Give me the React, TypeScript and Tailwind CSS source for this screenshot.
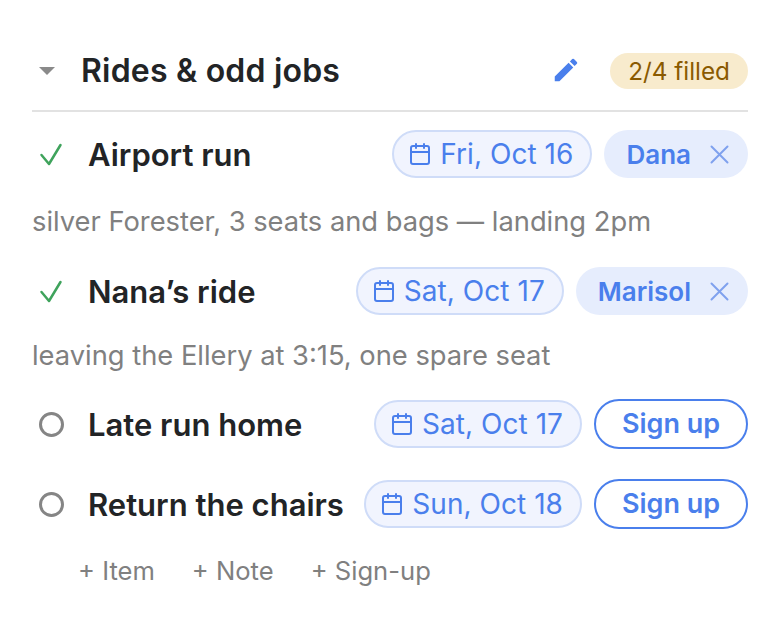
import { Calendar } from "lucide-react";

function DateChip({ label }: { label: string }) {
  return (
    <span className="flex h-[48px] items-center gap-[8px] rounded-full border-2 border-[#cfdcf8] bg-[#f1f4fe] pl-[14px] pr-[17px] text-[28px] tracking-[0.05px] text-[#4a7fec]">
      <Calendar size={24} strokeWidth={2} />
      {label}
    </span>
  );
}

function Assignee({ name }: { name: string }) {
  return (
    <span className="flex h-[48px] items-center gap-[19px] rounded-full bg-[#e6edfd] pl-[22px] pr-[19px] text-[26px] font-semibold text-[#4a7fec]">
      {name}
      <svg width="19" height="19" viewBox="0 0 19 19" fill="none" stroke="#7fa1ee" strokeWidth="2" strokeLinecap="round">
        <path d="M1.5 1.5l16 16M17.5 1.5l-16 16" />
      </svg>
    </span>
  );
}

function SignUp() {
  return (
    <button className="flex h-[50px] w-[154px] items-center justify-center rounded-full border-2 border-[#4a7fec] text-[27px] font-semibold text-[#4a7fec]">
      Sign up
    </button>
  );
}

function Row({ done, title, date, who }: { done?: boolean; title: string; date: string; who?: string }) {
  return (
    <div className="flex items-center">
      <div className="flex w-[38px] justify-center">
        {done ? (
          <svg width="24" height="24" viewBox="0 0 24 24" fill="none" stroke="#3fa35c" strokeWidth="2.5" strokeLinecap="round" strokeLinejoin="round">
            <path d="M2.5 13l7.5 9 11.5-19" />
          </svg>
        ) : (
          <span className="h-[25px] w-[25px] rounded-full border-[3px] border-[#858585]" />
        )}
      </div>
      <span className="ml-[18px] flex-1 pt-[2px] text-[31px] leading-[40px] font-semibold text-[#222426]">{title}</span>
      <div className="flex items-center gap-[12px]">
        <DateChip label={date} />
        {who ? <Assignee name={who} /> : <SignUp />}
      </div>
    </div>
  );
}

export default function App() {
  return (
    <div className="h-[632px] w-[780px] bg-white px-[32px] pt-[32px] font-['Inter',sans-serif]">
      <div className="flex h-[80px] items-center border-b-2 border-[#e2e2e2]">
        <span className="ml-[7px] h-0 w-0 border-x-[8px] border-t-[8px] border-x-transparent border-t-[#8a8a8a]" />
        <h1 className="ml-[26px] flex-1 text-[32px] font-semibold tracking-[0.2px] text-[#222426]">Rides &amp; odd jobs</h1>
        <svg width="30" height="30" viewBox="0 0 24 24" fill="#4a7fec" className="mb-[3px] mr-[29px]">
          <path d="M3 17.25V21h3.75L17.81 9.94l-3.75-3.75L3 17.25zM20.71 7.04a1 1 0 0 0 0-1.41l-2.34-2.34a1 1 0 0 0-1.41 0l-1.83 1.83 3.75 3.75 1.83-1.83z" />
        </svg>
        <span className="flex h-[36px] items-center rounded-full bg-[#f8ebcd] pl-[18px] pr-[18px] text-[24.3px] text-[#8a5a00]">2/4 filled</span>
      </div>

      <div className="mt-[18px]">
        <Row done title="Airport run" date="Fri, Oct 16" who="Dana" />
      </div>
      <p className="mt-[27px] text-[27.3px] leading-[34px] text-[#808080]">silver Forester, 3 seats and bags — landing 2pm</p>
      <div className="mt-[28px]">
        <Row done title="Nana’s ride" date="Sat, Oct 17" who="Marisol" />
      </div>
      <p className="mt-[24px] text-[27.3px] leading-[34px] text-[#808080]">leaving the Ellery at 3:15, one spare seat</p>
      <div className="mt-[26px]">
        <Row title="Late run home" date="Sat, Oct 17" />
      </div>
      <div className="mt-[30px]">
        <Row title="Return the chairs" date="Sun, Oct 18" />
      </div>
      <div className="ml-[46px] mt-[23px] flex gap-[37px] text-[25.6px] text-[#808080]">
        <span>+ Item</span>
        <span>+ Note</span>
        <span>+ Sign-up</span>
      </div>
    </div>
  );
}
